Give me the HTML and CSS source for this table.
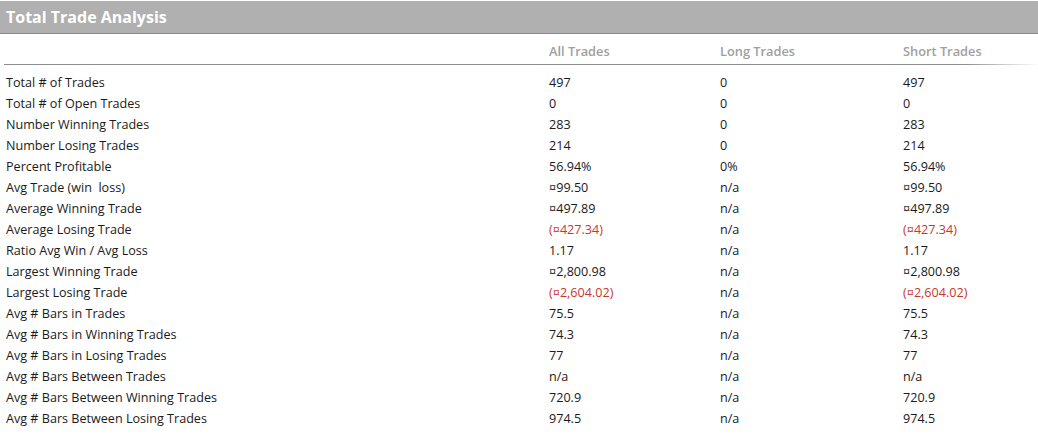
FILE: index.html
```html
<!DOCTYPE html>
<html>
<head>
<meta charset="utf-8">
<link rel="stylesheet" href="styles.css">
</head>
<body>
<div class="panel">
  <div class="title">Total Trade Analysis</div>
  <div class="grid head">
    <div></div><div>All Trades</div><div>Long Trades</div><div>Short Trades</div>
  </div>
  <div class="rule"></div>
  <div class="rows">
    <div class="grid row"><div>Total # of Trades</div><div>497</div><div>0</div><div>497</div></div>
    <div class="grid row"><div>Total # of Open Trades</div><div>0</div><div>0</div><div>0</div></div>
    <div class="grid row"><div>Number Winning Trades</div><div>283</div><div>0</div><div>283</div></div>
    <div class="grid row"><div>Number Losing Trades</div><div>214</div><div>0</div><div>214</div></div>
    <div class="grid row"><div>Percent Profitable</div><div>56.94%</div><div>0%</div><div>56.94%</div></div>
    <div class="grid row"><div>Avg Trade (win&nbsp; loss)</div><div>¤99.50</div><div>n/a</div><div>¤99.50</div></div>
    <div class="grid row"><div>Average Winning Trade</div><div>¤497.89</div><div>n/a</div><div>¤497.89</div></div>
    <div class="grid row"><div>Average Losing Trade</div><div class="neg">(¤427.34)</div><div>n/a</div><div class="neg">(¤427.34)</div></div>
    <div class="grid row"><div>Ratio Avg Win / Avg Loss</div><div>1.17</div><div>n/a</div><div>1.17</div></div>
    <div class="grid row"><div>Largest Winning Trade</div><div>¤2,800.98</div><div>n/a</div><div>¤2,800.98</div></div>
    <div class="grid row"><div>Largest Losing Trade</div><div class="neg">(¤2,604.02)</div><div>n/a</div><div class="neg">(¤2,604.02)</div></div>
    <div class="grid row"><div>Avg # Bars in Trades</div><div>75.5</div><div>n/a</div><div>75.5</div></div>
    <div class="grid row"><div>Avg # Bars in Winning Trades</div><div>74.3</div><div>n/a</div><div>74.3</div></div>
    <div class="grid row"><div>Avg # Bars in Losing Trades</div><div>77</div><div>n/a</div><div>77</div></div>
    <div class="grid row"><div>Avg # Bars Between Trades</div><div>n/a</div><div>n/a</div><div>n/a</div></div>
    <div class="grid row"><div>Avg # Bars Between Winning Trades</div><div>720.9</div><div>n/a</div><div>720.9</div></div>
    <div class="grid row"><div>Avg # Bars Between Losing Trades</div><div>974.5</div><div>n/a</div><div>974.5</div></div>
  </div>
</div>
</body>
</html>
```
FILE: styles.css
```css
html, body {
  margin: 0;
  padding: 0;
  background: #ffffff;
}
body {
  font-family: "Open Sans", "DejaVu Sans", sans-serif;
  font-size: 12.6px;
  color: #1a1a1a;
}
.panel {
  padding-top: 1px;
}
.title {
  height: 32px;
  line-height: 32px;
  background: #b0b0b0;
  border-bottom: 1px solid #8a8a8a;
  color: #ffffff;
  font-weight: bold;
  font-size: 16px;
  padding-left: 6px;
}
.grid {
  display: grid;
  grid-template-columns: 543px 171px 183px 1fr;
  padding-left: 6px;
}
.head {
  height: 26px;
  align-items: center;
  color: #a0a0a0;
  font-weight: 600;
  font-size: 12.8px;
  padding-top: 4px;
}
.rule {
  height: 1px;
  margin-left: 4px;
  background: linear-gradient(to right, #8f8f8f 0, #8f8f8f 93%, #ffffff 100%);
}
.rows {
  padding-top: 7px;
}
.row {
  height: 21px;
  line-height: 21px;
}
.neg {
  color: #c8372d;
}
```
